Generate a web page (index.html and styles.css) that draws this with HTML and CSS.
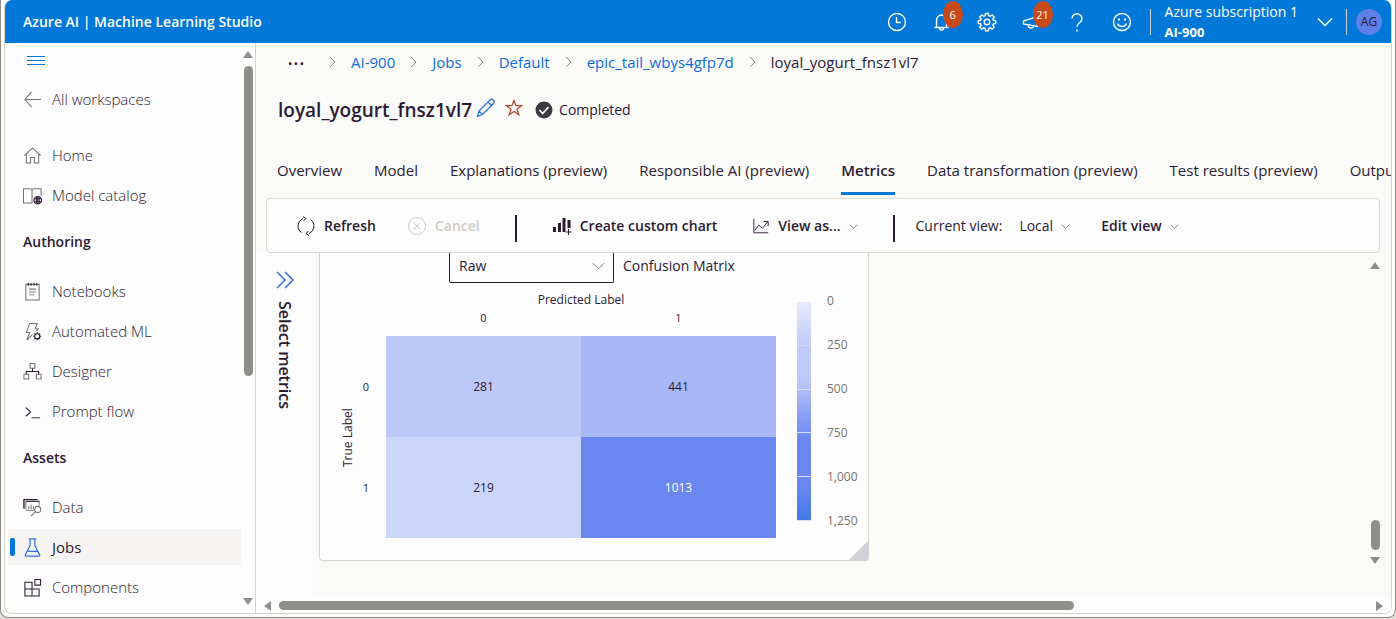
FILE: index.html
```html
<!DOCTYPE html>
<html lang="en">
<head>
<meta charset="utf-8">
<title>Azure AI | Machine Learning Studio</title>
<link rel="stylesheet" href="styles.css">
</head>
<body>
<div class="window">
<div class="app">
  <header class="topbar">
    <a class="brand" href="#">Azure AI | Machine Learning Studio</a>
    <div class="top-actions">
      <button class="top-btn" aria-label="Recent"><svg width="20" height="20" viewBox="0 0 20 20"><circle cx="10" cy="10" r="8.5"/><path d="M9.500 5v5.500h4.500"/></svg></button>
      <button class="top-btn" aria-label="Notifications"><svg width="20" height="20" viewBox="0 0 20 20"><path d="M2.500 15.500h14M4.500 15.500V8.500a5 5.500 0 0 1 10 0v7M7.500 16a2 2 0 0 0 4 0"/></svg><span class="badge">6</span></button>
      <button class="top-btn" aria-label="Settings"><svg width="20" height="20" viewBox="0 0 20 20"><path d="M8.600 1.500h2.800l.5 2.300 1.300.5 2-1.300 2 2-1.300 2 .5 1.300 2.300.5v2.600l-2.300.5-.5 1.300 1.300 2-2 2-2-1.300-1.300.5-.5 2.300H8.600l-.5-2.300-1.300-.5-2 1.300-2-2 1.300-2-.5-1.300-2.300-.5V8.800l2.300-.5.500-1.300-1.300-2 2-2 2 1.300 1.300-.5z"/><circle cx="10" cy="10" r="2.800"/></svg></button>
      <button class="top-btn" aria-label="Announcements"><svg width="20" height="20" viewBox="0 0 20 20"><path d="M1.500 9v3l14 2.500V4.500zM6 13.500c.5 3 4.500 3.500 5.500 1"/></svg><span class="badge">21</span></button>
      <button class="top-btn" aria-label="Help"><svg width="20" height="20" viewBox="0 0 20 20"><path d="M5 6.500a5 4.800 0 1 1 7.800 4C11 11.800 10 12.500 10 15M10 17.500v2"/></svg></button>
      <button class="top-btn" aria-label="Feedback"><svg width="20" height="20" viewBox="0 0 20 20"><circle cx="10" cy="10" r="8.500"/><path d="M5.500 11.500c1.500 4 7.500 4 9 0"/><path d="M7 6.500v2M13 6.500v2" stroke-width="2"/></svg></button>
    </div>
    <button class="subscription">
      <span class="sub-text"><span>Azure subscription 1</span><b>AI-900</b></span>
      <svg width="16" height="10" viewBox="0 0 16 10"><path d="M1 1.500l7 7 7-7"/></svg>
    </button>
    <button class="account" aria-label="Account"><span class="avatar">AG</span></button>
  </header>

  <div class="body">
    <aside class="sidebar">
      <nav class="nav">
        <button class="menu" aria-label="Toggle navigation"><svg width="20" height="12" viewBox="0 0 20 12"><path d="M1 1.500h18M1 5.500h18M1 9.500h18"/></svg></button>
        <a class="item back" href="#"><svg class="ico" viewBox="0 0 20 20"><path d="M19 10H2M9 2L2 10l7 8"/></svg>All workspaces</a>
        <a class="item" href="#"><svg class="ico" viewBox="0 0 20 20"><path d="M1.500 10L10 2l8.500 8M3.500 8.500V18H8v-6h4v6h4.500V8.500"/></svg>Home</a>
        <a class="item" href="#"><svg class="ico" viewBox="0 0 20 20"><path d="M9.500 18H.5V3H7c1.500 0 2.500.5 2.500 1.500C9.500 3.500 10.500 3 12 3h7v7M9.500 4.500V18"/><g class="dark"><circle cx="15.500" cy="15" r="4"/><path d="M11.500 13.500h8M11.500 16.500h8M15.500 11v8M14 11.500v7M17 11.500v7"/></g></svg>Model catalog</a>
        <h2 class="group">Authoring</h2>
        <a class="item" href="#"><svg class="ico" viewBox="0 0 20 20"><path d="M3 2.500h14V19H3zM6.500 7.500h7M6.500 10.500h7M6.500 13.500h5"/><path class="dark" d="M5.500 1v3M8.500 1v3M11.500 1v3M14.500 1v3"/></svg>Notebooks</a>
        <a class="item" href="#"><svg class="ico" viewBox="0 0 20 20"><path d="M13 7l2-5.500H7L3.500 11H7l-3 8 6-6M12.500 7H16l-2 2.500"/><g class="dark"><circle cx="15" cy="15" r="2.700"/><path d="M15 10.800v1.500M15 17.700v1.500M10.800 15h1.500M17.700 15h1.500M12 12l1 1M17 17l1 1M18 12l-1 1M13 17l-1 1"/></g></svg>Automated ML</a>
        <a class="item" href="#"><svg class="ico" viewBox="0 0 20 20"><path d="M7.500 1.500h5v5h-5zM1 13h5v5H1zM14 13h5v5h-5z"/><path class="dark" d="M10 6.500V10M3.500 13v-3h13v3"/></svg>Designer</a>
        <a class="item" href="#"><svg class="ico" viewBox="0 0 20 20"><path class="dark" d="M3 6l5 4.500L3 15"/><path d="M9 16.500h9" stroke-width="1.500"/></svg>Prompt flow</a>
        <h2 class="group">Assets</h2>
        <a class="item" href="#"><svg class="ico" viewBox="0 0 20 20"><path d="M3 11.500V3.500h14V8M12 13H3M1 11V1.500h14M6 11.500V9M8.500 11.500V7M11 11.500V9"/><path class="dark" d="M1 11V1.500h14M3 3.500h14"/><circle cx="15.500" cy="12" r="3.200"/><path d="M13 14.500L8.500 19"/></svg>Data</a>
        <a class="item active" href="#" aria-current="page"><svg class="ico" viewBox="0 0 20 20"><path d="M6 1h8M7.500 1v7L2.500 17.500q-.5 1.500 1 1.500h13q1.500 0 1-1.500L12.500 8V1M4.500 14h11"/></svg>Jobs</a>
        <a class="item" href="#"><svg class="ico" viewBox="0 0 20 20"><path class="dark" d="M2 4.500h7.500V19H2zM2 11.500h15V19H9.500M12.500 1.500h6v6h-6z"/></svg>Components</a>
      </nav>
      <div class="vscroll" aria-hidden="true"><i class="tri up"></i><i class="thumb"></i><i class="tri down"></i></div>
    </aside>

    <main class="main">
      <nav class="crumbs" aria-label="Breadcrumb">
        <button class="more" aria-label="More">···</button>
        <svg class="sep" viewBox="0 0 8 14"><path d="M1 1l6 6-6 6"/></svg>
        <a href="#">AI-900</a>
        <svg class="sep" viewBox="0 0 8 14"><path d="M1 1l6 6-6 6"/></svg>
        <a href="#">Jobs</a>
        <svg class="sep" viewBox="0 0 8 14"><path d="M1 1l6 6-6 6"/></svg>
        <a href="#">Default</a>
        <svg class="sep" viewBox="0 0 8 14"><path d="M1 1l6 6-6 6"/></svg>
        <a href="#">epic_tail_wbys4gfp7d</a>
        <svg class="sep" viewBox="0 0 8 14"><path d="M1 1l6 6-6 6"/></svg>
        <span>loyal_yogurt_fnsz1vl7</span>
      </nav>
      <div class="title-row">
        <h1>loyal_yogurt_fnsz1vl7</h1>
        <button class="plain" aria-label="Edit name"><svg class="pencil" width="20" height="20" viewBox="0 0 20 20"><path d="M1.500 18.500l1.500-5.500L14 2q1.500-1.500 3.200 0 1.800 1.700.3 3.500L6.500 16.500zM12 4l4 4M3 13l3.500 3.500"/></svg></button>
        <button class="plain" aria-label="Favorite"><svg class="star" width="18" height="18" viewBox="0 0 18 18"><path d="M9 1.500l2 5.200h5.500L12 10.200l1.800 5.600L9 12.500l-4.800 3.300L6 10.200 1.500 6.700H7z"/></svg></button>
        <span class="status"><svg width="18" height="18" viewBox="0 0 18 18"><circle cx="9" cy="9" r="8.500"/><path d="M4.500 9l3.200 3.500L13.500 6"/></svg>Completed</span>
      </div>
      <div class="tabs" role="tablist">
        <button role="tab">Overview</button>
        <button role="tab">Model</button>
        <button role="tab">Explanations (preview)</button>
        <button role="tab">Responsible AI (preview)</button>
        <button role="tab" class="on" aria-selected="true">Metrics</button>
        <button role="tab">Data transformation (preview)</button>
        <button role="tab">Test results (preview)</button>
        <button role="tab">Outputs + logs</button>
      </div>

      <div class="toolbar">
        <button class="tool"><svg width="20" height="20" viewBox="0 0 20 20"><path d="M7 2.500A8 8 0 0 0 5.500 16.500M13 17.500A8 8 0 0 0 14.500 3.500M7 .5l3 2L7.500 5M12.500 15L10 17.500l3 2"/></svg>Refresh</button>
        <button class="tool" disabled><svg width="20" height="20" viewBox="0 0 20 20"><circle cx="10" cy="10" r="8.500"/><path d="M6.500 6.500l7 7M13.500 6.500l-7 7"/></svg>Cancel</button>
        <span class="bar"></span>
        <button class="tool create"><svg width="20" height="20" viewBox="0 0 20 20"><path class="fill" d="M1 11h3v5H1zM6 7h3v9H6zM10.500 2h3v14h-3zM15.500 4h3v8h-3z"/><path d="M16.500 13v6M13.500 16h6"/></svg>Create custom chart</button>
        <button class="tool view"><svg width="18" height="18" viewBox="0 0 20 20"><path d="M2 2v15.500h16M3 15l4.500-6 4 3.500 6-7M13 5h5v5"/></svg>View as...<svg class="chev" viewBox="0 0 10 6"><path d="M1 .5L5 4.500 9 .5"/></svg></button>
        <span class="bar"></span>
        <span class="current">Current view:</span>
        <button class="tool light">Local<svg class="chev" viewBox="0 0 10 6"><path d="M1 .5L5 4.500 9 .5"/></svg></button>
        <button class="tool edit">Edit view<svg class="chev" viewBox="0 0 10 6"><path d="M1 .5L5 4.500 9 .5"/></svg></button>
      </div>

      <div class="workspace">
        <button class="select-metrics"><svg width="20" height="18" viewBox="0 0 20 18"><path d="M2 1l8 8-8 8M10 1l8 8-8 8"/></svg><span>Select metrics</span></button>
        <div class="canvas">
          <section class="card">
            <div class="card-head">
              <label class="norm"><select aria-label="Normalization"><option>Raw</option><option>Normalized</option></select><svg viewBox="0 0 14 8"><path d="M1 1l6 6 6-6"/></svg></label>
              <h3>Confusion Matrix</h3>
            </div>
            <div class="chart">
              <div class="y-title">True Label</div>
              <table class="matrix">
                <caption>Predicted Label</caption>
                <thead><tr><th></th><th>0</th><th>1</th></tr></thead>
                <tbody>
                  <tr><th>0</th><td class="c281">281</td><td class="c441">441</td></tr>
                  <tr><th>1</th><td class="c219">219</td><td class="c1013">1013</td></tr>
                </tbody>
              </table>
              <div class="scale"><i></i><i></i><i></i><i></i><i></i></div>
              <div class="ticks"><span>0</span><span>250</span><span>500</span><span>750</span><span>1,000</span><span>1,250</span></div>
            </div>
            <svg class="grip" viewBox="0 0 19 19"><path d="M19 0v19H0z"/></svg>
          </section>
        </div>
        <div class="vscroll" aria-hidden="true"><i class="tri up"></i><i class="thumb"></i><i class="tri down"></i></div>
      </div>
      <div class="hscroll" aria-hidden="true"><i class="tri left"></i><i class="track"><i class="thumb"></i></i><i class="tri right"></i></div>
    </main>
  </div>
</div>
</div>
</body>
</html>
```
FILE: styles.css
```css
* { box-sizing: border-box; }
html, body { height: 100%; }
body {
  margin: 0;
  padding-bottom: 1px;
  background: #e4e1dc;
  color: #2b1a33;
  font: 14px/20px "Open Sans", "Noto Sans", sans-serif;
  overflow: hidden;
}
button, select { font: inherit; color: inherit; background: none; border: 0; padding: 0; margin: 0; }
a { color: inherit; text-decoration: none; }
svg { fill: none; stroke: currentColor; flex: none; }
h1, h2, h3 { margin: 0; }

.window {
  height: 100%;
  padding: 0 3px 3px 3px;
  border: solid #8c8b85;
  border-width: 0 1px 1px 1px;
  border-radius: 0 0 8px 8px;
  background: #fdfdfd;
}
.app {
  height: 100%;
  display: flex;
  flex-direction: column;
  border: solid #d9d4cb;
  border-width: 0 1px 1px 1px;
  border-radius: 8px;
  overflow: hidden;
  background: #fdfdfd;
}

/* Top bar */
.topbar { flex: none; display: flex; align-items: center; height: 43px; padding-left: 18px; background: #0078d7; color: #fff; }
.brand { font-weight: 600; margin-right: auto; }
.top-actions { display: flex; gap: 25px; margin-right: 18px; }
.top-btn { position: relative; display: flex; width: 20px; height: 20px; }
.top-btn svg { stroke-width: 1.4; }
.badge {
  position: absolute; left: 11px; top: -11px;
  width: 20px; height: 27px; border-radius: 50%;
  background: #c64a1c; font-size: 11px; line-height: 27px; text-align: center;
}
.subscription { display: flex; align-items: center; gap: 19px; height: 26px; padding: 0 13px 0 14px; border-left: 1px solid #c9d3dc; text-align: left; }
.sub-text { display: flex; flex-direction: column; line-height: 20px; }
.sub-text b { font-size: 13px; }
.subscription svg { stroke-width: 1.5; }
.account { height: 26px; display: flex; align-items: center; padding: 0 9px 0 9px; border-left: 1px solid #c9d3dc; }
.avatar { width: 26px; height: 26px; border-radius: 50%; background: #5f7fe8; color: #2b1a33; font-size: 12px; line-height: 26px; text-align: center; }

.body { flex: 1; min-height: 0; display: flex; }

/* Sidebar */
.sidebar { flex: none; width: 251px; display: flex; border-right: 1px solid #d9d4cb; }
.nav { flex: 1; min-width: 0; padding: 8px 0 0 3px; overflow: hidden; font-size: 15px; }
.menu { display: flex; align-items: center; height: 20px; margin-left: 18px; }
.menu svg { stroke: #0078d7; }
.item { display: flex; align-items: center; gap: 10px; height: 40px; padding-left: 15px; font-weight: 300; }
.item.back { margin: 8px 0 16px; }
.ico { width: 19px; height: 19px; color: #77736f; stroke-width: 1.1; }
.dark { color: #2b1a33; stroke: #2b1a33; }
.group { height: 56px; padding-left: 15px; font-size: 14px; line-height: 54px; font-weight: 600; }
.item.active { height: 36px; margin: 2px 0; padding-left: 2px; gap: 8px; background: #f6f5f3; font-weight: 400; }
.item.active::before { content: ""; width: 5px; height: 18px; border-radius: 2px; background: #0078d7; }
.item.active .ico { color: #2f6fe4; margin-right: 2px; stroke-width: 1.3; }

/* Scroll bars */
.vscroll { flex: none; width: 14px; display: flex; flex-direction: column; align-items: center; }
.thumb { display: block; border-radius: 5px; background: #8f8e88; }
.tri { flex: none; border: 5px solid transparent; }
.tri.up { border-top: 0; border-bottom: 7px solid #8f8e88; }
.tri.down { border-bottom: 0; border-top: 7px solid #8f8e88; margin-top: auto; }
.tri.left { border-left: 0; border-right: 7px solid #8f8e88; }
.tri.right { border-right: 0; border-left: 7px solid #8f8e88; }
.sidebar .vscroll { padding: 8px 0; }
.sidebar .thumb { width: 9px; height: 56%; margin-top: 8px; }
.workspace .vscroll { width: 32px; padding: 9px 0 34px; }
.workspace .thumb { width: 9px; height: 30px; margin-top: auto; }
.workspace .tri.down { margin-top: 7px; }
.hscroll { flex: none; display: flex; align-items: center; height: 15px; padding: 0 8px; background: #fdfdfd; }
.hscroll .track { flex: 1; margin: 0 8px; }
.hscroll .thumb { width: 73%; height: 9px; }

/* Page header */
.main { flex: 1; min-width: 0; display: flex; flex-direction: column; background: #fafaf9; }
.crumbs { display: flex; align-items: center; gap: 15px; height: 37px; padding-left: 30px; white-space: nowrap; font-size: 15px; }
.crumbs a { color: #0f6cdb; }
.more { width: 20px; font-size: 22px; margin-right: 8px; }
.sep { width: 7px; height: 12px; color: #77736f; }
.title-row { display: flex; align-items: center; height: 60px; padding-left: 22px; }
h1 { font-size: 19px; font-weight: 600; line-height: 28px; margin-right: -5px; }
.plain { display: flex; margin-left: 9px; padding-bottom: 4px; }
.pencil { color: #2f6fe4; stroke-width: 1.3; }
.star { color: #b5472a; stroke-width: 1.2; }
.status { display: flex; align-items: center; gap: 6px; margin-left: 12px; }
.status circle { fill: #3d3940; stroke: none; }
.status path { stroke: #fdfdfd; stroke-width: 1.8; }
.tabs { display: flex; gap: 32px; padding: 10px 0 0 21px; overflow: hidden; white-space: nowrap; height: 58px; font-size: 15px; }
.tabs button { flex: none; height: 45px; padding-bottom: 5px; }
.tabs .on { font-weight: 600; border-bottom: 3px solid #0078d7; padding-bottom: 2px; }

/* Toolbar */
.toolbar {
  flex: none; display: flex; align-items: center; height: 55px;
  margin: 0 11px 0 10px; padding-left: 29px;
  border: 1px solid #ddd8d0; border-radius: 4px; background: #fdfdfd; white-space: nowrap;
}
.tool { display: flex; align-items: center; gap: 8px; font-weight: 600; }
.tool + .tool { margin-left: 31px; }
.tool + .view { margin-left: 35px; }
.tool:disabled { color: #cfcbc5; }
.tool.light { font-weight: 400; margin-left: 17px; }
.tool .fill { fill: #2b1a33; stroke: none; }
.bar { width: 2px; height: 27px; margin: 6px 35px 0; background: #2b1a33; }
.bar + .current { margin-left: -14px; }
.chev { width: 9px; height: 6px; color: #77736f; margin-top: 3px; }

/* Metrics area */
.workspace { flex: 1; min-height: 0; display: flex; }
.select-metrics { flex: none; width: 57px; display: flex; flex-direction: column; align-items: center; gap: 12px; padding-top: 18px; background: #fdfdfd; font-weight: 600; font-size: 16px; }
.select-metrics svg { color: #2f6fe4; stroke-width: 1.5; }
.select-metrics span { writing-mode: vertical-rl; line-height: 20px; }
.canvas { flex: 1; min-width: 0; padding-left: 6px; overflow: hidden; }
.card { position: relative; width: 550px; padding-bottom: 22px; border: 1px solid #d9d4cb; border-top: 0; border-radius: 0 0 4px 4px; background: #fdfdfd; }
.card-head { display: flex; align-items: center; gap: 9px; height: 30px; padding-left: 129px; }
.card-head h3 { font-size: 14px; font-weight: 400; padding-bottom: 4px; }
.norm { position: relative; width: 165px; height: 30px; }
.norm select { width: 100%; height: 100%; padding: 0 0 4px 9px; border: 1px solid #2b1a33; border-top: 0; border-radius: 0 0 2px 2px; appearance: none; }
.norm svg { position: absolute; right: 9px; top: 9px; width: 13px; height: 8px; color: #77736f; pointer-events: none; }
.chart { display: flex; padding-left: 20px; font-size: 12px; line-height: 16px; }
.y-title { writing-mode: vertical-rl; transform: rotate(180deg); width: 16px; text-align: center; padding-bottom: 54px; }
.matrix { border-collapse: collapse; table-layout: fixed; width: 420px; text-align: center; }
.matrix caption { padding: 9px 0 1px 30px; }
.matrix th { font-weight: 400; font-size: 11px; }
.matrix th:first-child { width: 30px; padding: 0 10px 0 0; }
.matrix thead th { height: 27px; padding: 0 0 10px; }
.matrix td { height: 101px; padding: 0; }
.c281 { background: #bcc8f8; }
.c441 { background: #a8b8f6; }
.c219 { background: #ccd5fa; }
.c1013 { background: #6a86f1; color: #fff; }
.scale { display: flex; flex-direction: column; width: 14px; height: 219px; margin: 19px 16px 0 21px; background: linear-gradient(#e6eafc 0%, #c0cbf8 20%, #bcc8f8 36%, #8fa4f4 50%, #6a86f1 64%, #6a86f1 85%, #3f78e0 100%); }
.scale i { flex: 1; border-bottom: 1px solid #d9dcec; }
.ticks { display: flex; flex-direction: column; justify-content: space-between; height: 236px; margin-top: 10px; color: #77736f; }
.grip { position: absolute; right: 0; bottom: 0; width: 19px; height: 19px; fill: #cfd0d8; stroke: none; }
```
